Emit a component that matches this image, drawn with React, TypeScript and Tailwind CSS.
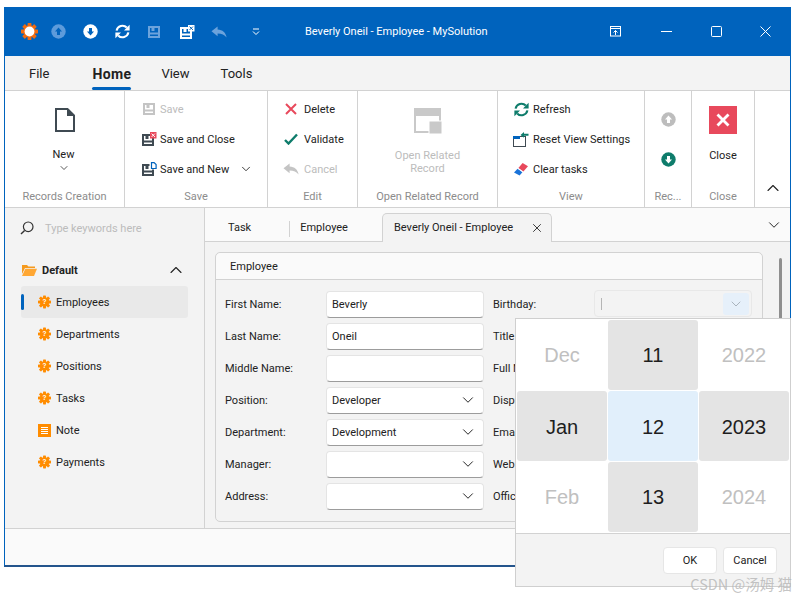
import type { ReactNode } from 'react';
import { ChevronDown, ChevronUp, X } from 'lucide-react';

const TEAL = '#0e7c6b';
const RED = '#e8495c';

const Floppy = ({ color }: { color: string }) => (
  <g>
    <rect x="1" y="1" width="10" height="10" fill="none" stroke={color} strokeWidth="2" />
    <path d="M0 7.5h12" stroke={color} strokeWidth="2" />
    <rect x="3.5" y="2" width="3" height="3" fill={color} />
  </g>
);

const SaveIcon = ({ color = '#c4c4c4' }: { color?: string }) => (
  <svg width="12" height="12" viewBox="0 0 12 12"><Floppy color={color} /></svg>
);

const SaveCloseIcon = ({ color = '#3f4a52', badge = RED, mark = '#fff' }: { color?: string; badge?: string; mark?: string }) => (
  <svg width="15" height="14" viewBox="0 0 15 14">
    <g transform="translate(0 2)"><Floppy color={color} /></g>
    <rect x="8" y="0" width="6.5" height="6.5" fill={badge} />
    <path d="M9.6 1.6l3.3 3.3M12.9 1.6l-3.3 3.3" stroke={mark} strokeWidth="1" />
  </svg>
);

const SaveNewIcon = () => (
  <svg width="15" height="14" viewBox="0 0 15 14">
    <g transform="translate(0 2)"><Floppy color="#3f4a52" /></g>
    <rect x="7.5" y="0" width="7.5" height="7.5" fill="#fff" />
    <path d="M9.5 6.5V.6h2.6l2 2v3.9z" fill="#fff" stroke="#0063bd" strokeWidth="1.2" />
  </svg>
);

const Circle = ({ dir, color, arrow = '#fff', size = 15 }: { dir: 'up' | 'down'; color: string; arrow?: string; size?: number }) => (
  <svg width={size} height={size} viewBox="0 0 15 15">
    <circle cx="7.5" cy="7.5" r="7.2" fill={color} />
    <path d={dir === 'up' ? 'M7.5 3.5L11 7.4H9V11H6V7.4H4z' : 'M7.5 11.5L11 7.6H9V4H6v3.6H4z'} fill={arrow} />
  </svg>
);

const Refresh = ({ color, size = 15 }: { color: string; size?: number }) => (
  <svg width={size} height={size} viewBox="0 0 15 15">
    <path d="M1.6 6.6A6 6 0 0 1 11.8 3.6" fill="none" stroke={color} strokeWidth="2.1" />
    <path d="M14.6 0.8V6.4H9z" fill={color} />
    <path d="M13.4 8.4A6 6 0 0 1 3.2 11.4" fill="none" stroke={color} strokeWidth="2.1" />
    <path d="M0.4 14.2V8.6H6z" fill={color} />
  </svg>
);

const Undo = ({ color, w = 16, h = 12 }: { color: string; w?: number; h?: number }) => (
  <svg width={w} height={h} viewBox="0 0 16 12">
    <path d="M0.5 5.2L6.6 0.4V3.4C11.6 3.6 14.6 6.4 15.6 11.4C13.4 8.8 10.8 7.4 6.6 7.4V10.2z" fill={color} />
  </svg>
);

const Gear = ({ color = '#ff8c00', size = 14, center, q = true }: { color?: string; size?: number; center?: string; q?: boolean }) => (
  <svg width={size} height={size} viewBox="0 0 16 16">
    {[0, 45, 90, 135].map(a => (
      <rect key={a} x="6.2" y="0" width="3.6" height="16" rx="0.6" fill={color} transform={`rotate(${a} 8 8)`} />
    ))}
    <circle cx="8" cy="8" r="5.8" fill={color} />
    {center && <circle cx="8" cy="8" r="4.6" fill={center} />}
    {q && <text x="8" y="10.8" textAnchor="middle" fontSize="8" fontWeight="700" fill="#fff" fontFamily="Liberation Sans, sans-serif">?</text>}
  </svg>
);

const Folder = () => (
  <svg width="15" height="12" viewBox="0 0 15 12">
    <path d="M0 1h5l1.4 1.6H13V4H3L0 10z" fill="#f59a1e" />
    <path d="M3.4 4.8H15L12 12H0z" fill="#ffa733" />
  </svg>
);

const NoteIcon = () => (
  <svg width="13" height="13" viewBox="0 0 13 13">
    <rect width="13" height="13" fill="#ff8c00" />
    <path d="M3 3.5h7M3 5.5h7M3 7.5h7M3 9.5h7" stroke="#fff" />
  </svg>
);

const DocIcon = () => (
  <svg width="20" height="24" viewBox="0 0 20 24">
    <path d="M1 1H12.5L19 7.5V23H1z" fill="#fff" stroke="#3f4a52" strokeWidth="2" />
    <path d="M12 1v7h7z" fill="#3f4a52" />
  </svg>
);

const RelatedIcon = () => (
  <svg width="28" height="26" viewBox="0 0 28 26">
    <rect x="1" y="1" width="25" height="23" fill="none" stroke="#c9c9c9" strokeWidth="2" />
    <rect x="1" y="1" width="25" height="7" fill="#c9c9c9" />
    <rect x="15" y="13" width="13" height="13" fill="#c9c9c9" stroke="#fff" />
  </svg>
);

const ResetIcon = () => (
  <svg width="16" height="15" viewBox="0 0 16 15">
    <rect x="0.5" y="4.5" width="12" height="10" fill="none" stroke="#3f4a52" />
    <rect x="0" y="4" width="7" height="3" fill="#0063bd" />
    <path d="M7.5 3L11 0v1.8h4.5v2H11v2z" fill={TEAL} />
  </svg>
);

const EraserIcon = () => (
  <svg width="14" height="13" viewBox="0 0 14 13">
    <path d="M8.6 0L14 3.2 9.4 8.4 4.4 5z" fill={RED} />
    <path d="M3.6 5.8L8.4 9.2 5.6 12.6 0 9.4z" fill="#1a73d9" />
    <path d="M4 5.4L8.8 8.8" stroke="#fff" strokeWidth="0.8" />
  </svg>
);

const TitleButton = ({ children, width }: { children: ReactNode; width: string }) => (
  <div className={`${width} flex items-center justify-center`}>{children}</div>
);

const TitleBar = () => (
  <div className="relative flex h-[49px] shrink-0 items-center bg-[#0063bd] pl-[8px] text-white">
    <TitleButton width="w-[32px]"><Gear color="#f26b10" size={17} center="#fff" q={false} /></TitleButton>
    <TitleButton width="w-[26px]"><Circle dir="up" color="#5d9bdb" arrow="#0063bd" /></TitleButton>
    <TitleButton width="w-[38px]"><Circle dir="down" color="#fff" arrow="#0063bd" /></TitleButton>
    <TitleButton width="w-[26px]"><Refresh color="#fff" /></TitleButton>
    <TitleButton width="w-[38px]"><SaveIcon color="#6ca3dc" /></TitleButton>
    <TitleButton width="w-[28px]"><SaveCloseIcon color="#fff" badge="#fff" mark="#0063bd" /></TitleButton>
    <TitleButton width="w-[35px]"><Undo color="#6ca3dc" /></TitleButton>
    <TitleButton width="w-[40px]">
      <svg width="8" height="8" viewBox="0 0 8 8"><path d="M1 1h6M1 3.5L4 6.5l3-3" fill="none" stroke="#fff" /></svg>
    </TitleButton>
    <span className="ml-[29px] pt-[2px] text-[11px]">Beverly Oneil - Employee - MySolution</span>
    <div className="ml-auto flex items-center">
      <TitleButton width="w-[50px]">
        <svg width="12" height="11" viewBox="0 0 12 11"><rect x="0.5" y="0.5" width="10" height="9.5" fill="none" stroke="#fff" /><path d="M0 2.5h11M5.5 9V4.5M3.5 6.5l2-2 2 2" stroke="#fff" fill="none" /></svg>
      </TitleButton>
      <TitleButton width="w-[50px]"><svg width="11" height="1" viewBox="0 0 11 1"><path d="M0 .5h11" stroke="#fff" /></svg></TitleButton>
      <TitleButton width="w-[50px]"><svg width="11" height="11" viewBox="0 0 11 11"><rect x="0.5" y="0.5" width="10" height="10" rx="1" fill="none" stroke="#fff" /></svg></TitleButton>
      <TitleButton width="w-[49px]"><svg width="11" height="11" viewBox="0 0 11 11"><path d="M.5.5l10 10M10.5.5l-10 10" stroke="#fff" /></svg></TitleButton>
    </div>
  </div>
);

const MenuBar = () => (
  <div className="flex h-[35px] shrink-0 items-center border-b border-[#d2d2d2] bg-[#f3f3f3] text-[13px] text-[#222]">
    <span className="ml-[24px] pt-[2px]">File</span>
    <div className="relative ml-[42px] flex h-full w-[41px] items-center justify-center">
      <span className="pt-[2px] text-[14px] font-bold tracking-[0.3px]">Home</span>
      <div className="absolute inset-x-[1px] bottom-0 h-[3px] rounded-full bg-[#0063bd]" />
    </div>
    <span className="ml-[29px] pt-[2px]">View</span>
    <span className="ml-[31px] pt-[2px]">Tools</span>
  </div>
);

const RibbonGroup = ({ title, width, children }: { title: string; width: string; children: ReactNode }) => (
  <div className={`${width} flex shrink-0 flex-col border-r border-[#d2d2d2]`}>
    <div className="flex-1">{children}</div>
    <div className="h-[21px] truncate text-center leading-[21px] text-[#8c8c8c]">{title}</div>
  </div>
);

const RibbonRow = ({ icon, label, disabled, gap = 'ml-[1px]' }: { icon: ReactNode; label: string; disabled?: boolean; gap?: string }) => (
  <div className={`flex h-[30px] items-center ${disabled ? 'text-[#bcbcbc]' : ''}`}>
    <div className="flex w-[18px] shrink-0 items-center justify-center">{icon}</div>
    <span className={`${gap} whitespace-nowrap pt-[2px]`}>{label}</span>
  </div>
);

const Ribbon = () => (
  <div className="flex h-[117px] shrink-0 border-b border-[#d2d2d2] bg-white text-[11px] text-[#222]">
    <RibbonGroup title="Records Creation" width="w-[120px]">
      <div className="flex flex-col items-center pt-[17px]">
        <DocIcon />
        <span className="-ml-[2px] mt-[15px]">New</span>
        <ChevronDown size={12} strokeWidth={1.5} className="-ml-[2px] -mt-[2px]" />
      </div>
    </RibbonGroup>
    <RibbonGroup title="Save" width="w-[143px]">
      <div className="flex flex-col pl-[15px] pt-[3px]">
        <RibbonRow gap="ml-[2px]" disabled icon={<SaveIcon />} label="Save" />
        <RibbonRow gap="ml-[2px]" icon={<SaveCloseIcon />} label="Save and Close" />
        <div className="flex items-center">
          <RibbonRow gap="ml-[2px]" icon={<SaveNewIcon />} label="Save and New" />
          <ChevronDown size={14} strokeWidth={1.5} className="ml-[10px]" />
        </div>
      </div>
    </RibbonGroup>
    <RibbonGroup title="Edit" width="w-[90px]">
      <div className="flex flex-col pl-[14px] pt-[3px]">
        <RibbonRow gap="ml-[4px]" icon={<svg width="12" height="12" viewBox="0 0 12 12"><path d="M1 1l10 10M11 1L1 11" stroke={RED} strokeWidth="2" /></svg>} label="Delete" />
        <RibbonRow gap="ml-[4px]" icon={<svg width="14" height="12" viewBox="0 0 14 12"><path d="M1 7l3.5 3.5L13 1.5" fill="none" stroke={TEAL} strokeWidth="2.4" /></svg>} label="Validate" />
        <RibbonRow gap="ml-[4px]" disabled icon={<Undo color="#c4c4c4" />} label="Cancel" />
      </div>
    </RibbonGroup>
    <RibbonGroup title="Open Related Record" width="w-[140px]">
      <div className="flex flex-col items-center pt-[17px] text-[#bcbcbc]">
        <RelatedIcon />
        <span className="mt-[15px] leading-[13px]">Open Related</span>
        <span className="leading-[13px]">Record</span>
      </div>
    </RibbonGroup>
    <RibbonGroup title="View" width="w-[147px]">
      <div className="flex flex-col pl-[14px] pt-[3px]">
        <RibbonRow gap="ml-[3px]" icon={<Refresh color={TEAL} />} label="Refresh" />
        <RibbonRow gap="ml-[3px]" icon={<ResetIcon />} label="Reset View Settings" />
        <RibbonRow gap="ml-[3px]" icon={<EraserIcon />} label="Clear tasks" />
      </div>
    </RibbonGroup>
    <RibbonGroup title="Rec..." width="w-[47px]">
      <div className="flex flex-col items-center gap-[25px] pt-[21px]">
        <Circle dir="up" color="#bdbdbd" />
        <Circle dir="down" color={TEAL} />
      </div>
    </RibbonGroup>
    <RibbonGroup title="Close" width="w-[63px]">
      <div className="flex flex-col items-center pt-[15px]">
        <div className="flex h-[28px] w-[28px] items-center justify-center bg-[#e8495c]">
          <X size={22} color="#fff" strokeWidth={3} strokeLinecap="butt" />
        </div>
        <span className="mt-[14px]">Close</span>
      </div>
    </RibbonGroup>
    <div className="flex flex-1 items-end justify-center pb-[9px]">
      <ChevronUp size={20} strokeWidth={1.3} />
    </div>
  </div>
);

const NavItem = ({ label, icon, active }: { label: string; icon: ReactNode; active?: boolean }) => (
  <div className={`relative flex h-[32px] items-center rounded-[3px] pl-[17px] ${active ? 'bg-[#e9e9e9]' : ''}`}>
    {active && <div className="absolute left-0 h-[16px] w-[3px] rounded-full bg-[#0063bd]" />}
    <div className="flex w-[13px] items-center justify-center">{icon}</div>
    <span className="ml-[5px] pt-[2px]">{label}</span>
  </div>
);

const Sidebar = () => (
  <div className="w-[200px] shrink-0 border-r border-[#d2d2d2] bg-[#f3f3f3] text-[11px] text-[#222]">
    <div className="flex h-[40px] items-center pl-[15px]">
      <svg width="14" height="14" viewBox="0 0 14 14"><circle cx="8.2" cy="5.8" r="4.8" fill="none" stroke="#333" strokeWidth="1.2" /><path d="M4.6 9.4L1 13" stroke="#333" strokeWidth="1.4" /></svg>
      <span className="ml-[11px] pt-[2px] text-[#bcbcbc]">Type keywords here</span>
    </div>
    <div className="flex h-[38px] items-center pl-[17px] pr-[18px] pt-[6px]">
      <Folder />
      <span className="ml-[5px] pt-[2px] font-bold">Default</span>
      <ChevronUp size={20} strokeWidth={1.3} className="ml-auto" />
    </div>
    <div className="ml-[16px] w-[167px]">
      <NavItem active label="Employees" icon={<Gear />} />
      <NavItem label="Departments" icon={<Gear />} />
      <NavItem label="Positions" icon={<Gear />} />
      <NavItem label="Tasks" icon={<Gear />} />
      <NavItem label="Note" icon={<NoteIcon />} />
      <NavItem label="Payments" icon={<Gear />} />
    </div>
  </div>
);

const TabStrip = () => (
  <div className="relative flex h-[34px] shrink-0 items-center border-b border-[#d2d2d2] bg-[#fafafa] pt-[8px] text-[11px] text-[#222]">
    <span className="ml-[23px]">Task</span>
    <div className="ml-[38px] h-[16px] w-px bg-[#d2d2d2]" />
    <span className="ml-[10px]">Employee</span>
    <div className="absolute bottom-[-1px] left-[177px] flex h-[29px] w-[170px] items-center rounded-t-[5px] border border-b-0 border-[#d2d2d2] bg-[#f3f3f3] pl-[11px]">
      <span>Beverly Oneil - Employee</span>
      <X size={14} strokeWidth={1.5} className="ml-auto mr-[7px]" />
    </div>
    <ChevronDown size={18} strokeWidth={1.3} className="mb-[8px] ml-auto mr-[7px]" />
  </div>
);

const Field = ({ value, select }: { value?: string; select?: boolean }) => (
  <div className="flex h-[27px] w-[158px] items-center rounded-[4px] border border-[#e4e4e4] border-b-[#9c9c9c] bg-white pl-[5px] pr-[6px]">
    <span className="pt-[2px]">{value}</span>
    {select && <ChevronDown size={18} strokeWidth={1.3} className="ml-auto" />}
  </div>
);

const FormRow = ({ label, value, select, second }: { label: string; value?: string; select?: boolean; second: string }) => (
  <div className="flex h-[32px] items-center">
    <span className="w-[101px] shrink-0 pt-[2px]">{label}</span>
    <Field value={value} select={select} />
    <span className="ml-[9px] whitespace-nowrap pt-[2px]">{second}</span>
  </div>
);

const EmployeeForm = () => (
  <div className="flex-1 overflow-hidden bg-[#f3f3f3] pl-[10px] pr-[8px] pt-[10px] text-[11px] text-[#222]">
    <div className="flex">
      <div className="h-[270px] w-[549px] rounded-[5px] border border-[#d2d2d2]">
        <div className="flex h-[27px] items-center rounded-t-[5px] border-b border-[#d2d2d2] bg-[#fafafa] pl-[14px] pt-[2px]">Employee</div>
        <div className="relative px-[9px] pt-[8px]">
          <FormRow label="First Name:" value="Beverly" second="Birthday:" />
          <FormRow label="Last Name:" value="Oneil" second="Title" />
          <FormRow label="Middle Name:" second="Full Name" />
          <FormRow label="Position:" value="Developer" select second="Display" />
          <FormRow label="Department:" value="Development" select second="Email" />
          <FormRow label="Manager:" select second="Web" />
          <FormRow label="Address:" select second="Office" />
          <div className="absolute left-[378px] top-[10px] flex h-[27px] w-[158px] items-center rounded-[4px] border border-[#e8e8e8] pl-[6px] pr-[2px]">
            <div className="h-[12px] w-px bg-[#b5b5b5]" />
            <div className="ml-auto flex h-[22px] w-[26px] items-center justify-center rounded-[3px] bg-[#e6f0fa]">
              <ChevronDown size={16} strokeWidth={1.2} color="#9aa4ad" />
            </div>
          </div>
        </div>
      </div>
      <div className="ml-[16px] mt-[6px] h-[120px] w-[3px] rounded-full bg-[#8f8f8f]" />
    </div>
  </div>
);

const PickCell = ({ text, tone, middle }: { text: string; tone: 'muted' | 'gray' | 'blue'; middle?: boolean }) => (
  <div
    className={`flex items-center justify-center rounded-[3px] ${middle ? 'pt-[2px]' : ''} ${
      tone === 'muted' ? 'text-[#c0c0c0]' : tone === 'gray' ? 'bg-[#e4e4e4] text-[#1e1e1e]' : 'bg-[#e1effb] text-[#1e1e1e]'
    }`}
  >
    {text}
  </div>
);

const DatePopup = () => (
  <div className="absolute left-[515px] top-[318px] flex h-[269px] w-[276px] flex-col border border-[#cfcfcf] bg-white">
    <div className="grid h-[214px] shrink-0 grid-cols-[90px_90px_90px] grid-rows-[70px_70px_70px] gap-px px-px pt-px font-['Liberation_Sans',sans-serif] text-[20px]">
      <PickCell text="Dec" tone="muted" />
      <PickCell text="11" tone="gray" />
      <PickCell text="2022" tone="muted" />
      <PickCell text="Jan" tone="gray" middle />
      <PickCell text="12" tone="blue" middle />
      <PickCell text="2023" tone="gray" middle />
      <PickCell text="Feb" tone="muted" />
      <PickCell text="13" tone="gray" />
      <PickCell text="2024" tone="muted" />
    </div>
    <div className="flex flex-1 items-center justify-end gap-[6px] border-t border-[#d2d2d2] bg-[#f3f3f3] pr-[13px] text-[11px] text-[#222]">
      <div className="flex h-[27px] w-[54px] items-center justify-center rounded-[4px] border border-[#e6e6e6] bg-white pt-[2px]">OK</div>
      <div className="flex h-[27px] w-[54px] items-center justify-center rounded-[4px] border border-[#e6e6e6] bg-white pt-[2px]">Cancel</div>
    </div>
  </div>
);

export default function App() {
  return (
    <div className="relative h-[598px] w-[799px] overflow-hidden bg-white font-['Roboto',sans-serif]">
      <div className="ml-[4px] flex h-[560px] w-[787px] translate-y-[7px] flex-col border-x border-b-2 border-x-[#0063bd] border-b-[#24548c] bg-[#fafafa]">
        <TitleBar />
        <MenuBar />
        <Ribbon />
        <div className="flex h-[321px] shrink-0 border-b border-[#d2d2d2]">
          <Sidebar />
          <div className="flex min-w-0 flex-1 flex-col">
            <TabStrip />
            <EmployeeForm />
          </div>
        </div>
      </div>
      <DatePopup />
      <span className="absolute right-[7px] top-[573px] font-['Noto_Sans_CJK_SC',sans-serif] text-[14.5px] text-[#b5b5b5]/80">CSDN @汤姆 猫</span>
    </div>
  );
}
